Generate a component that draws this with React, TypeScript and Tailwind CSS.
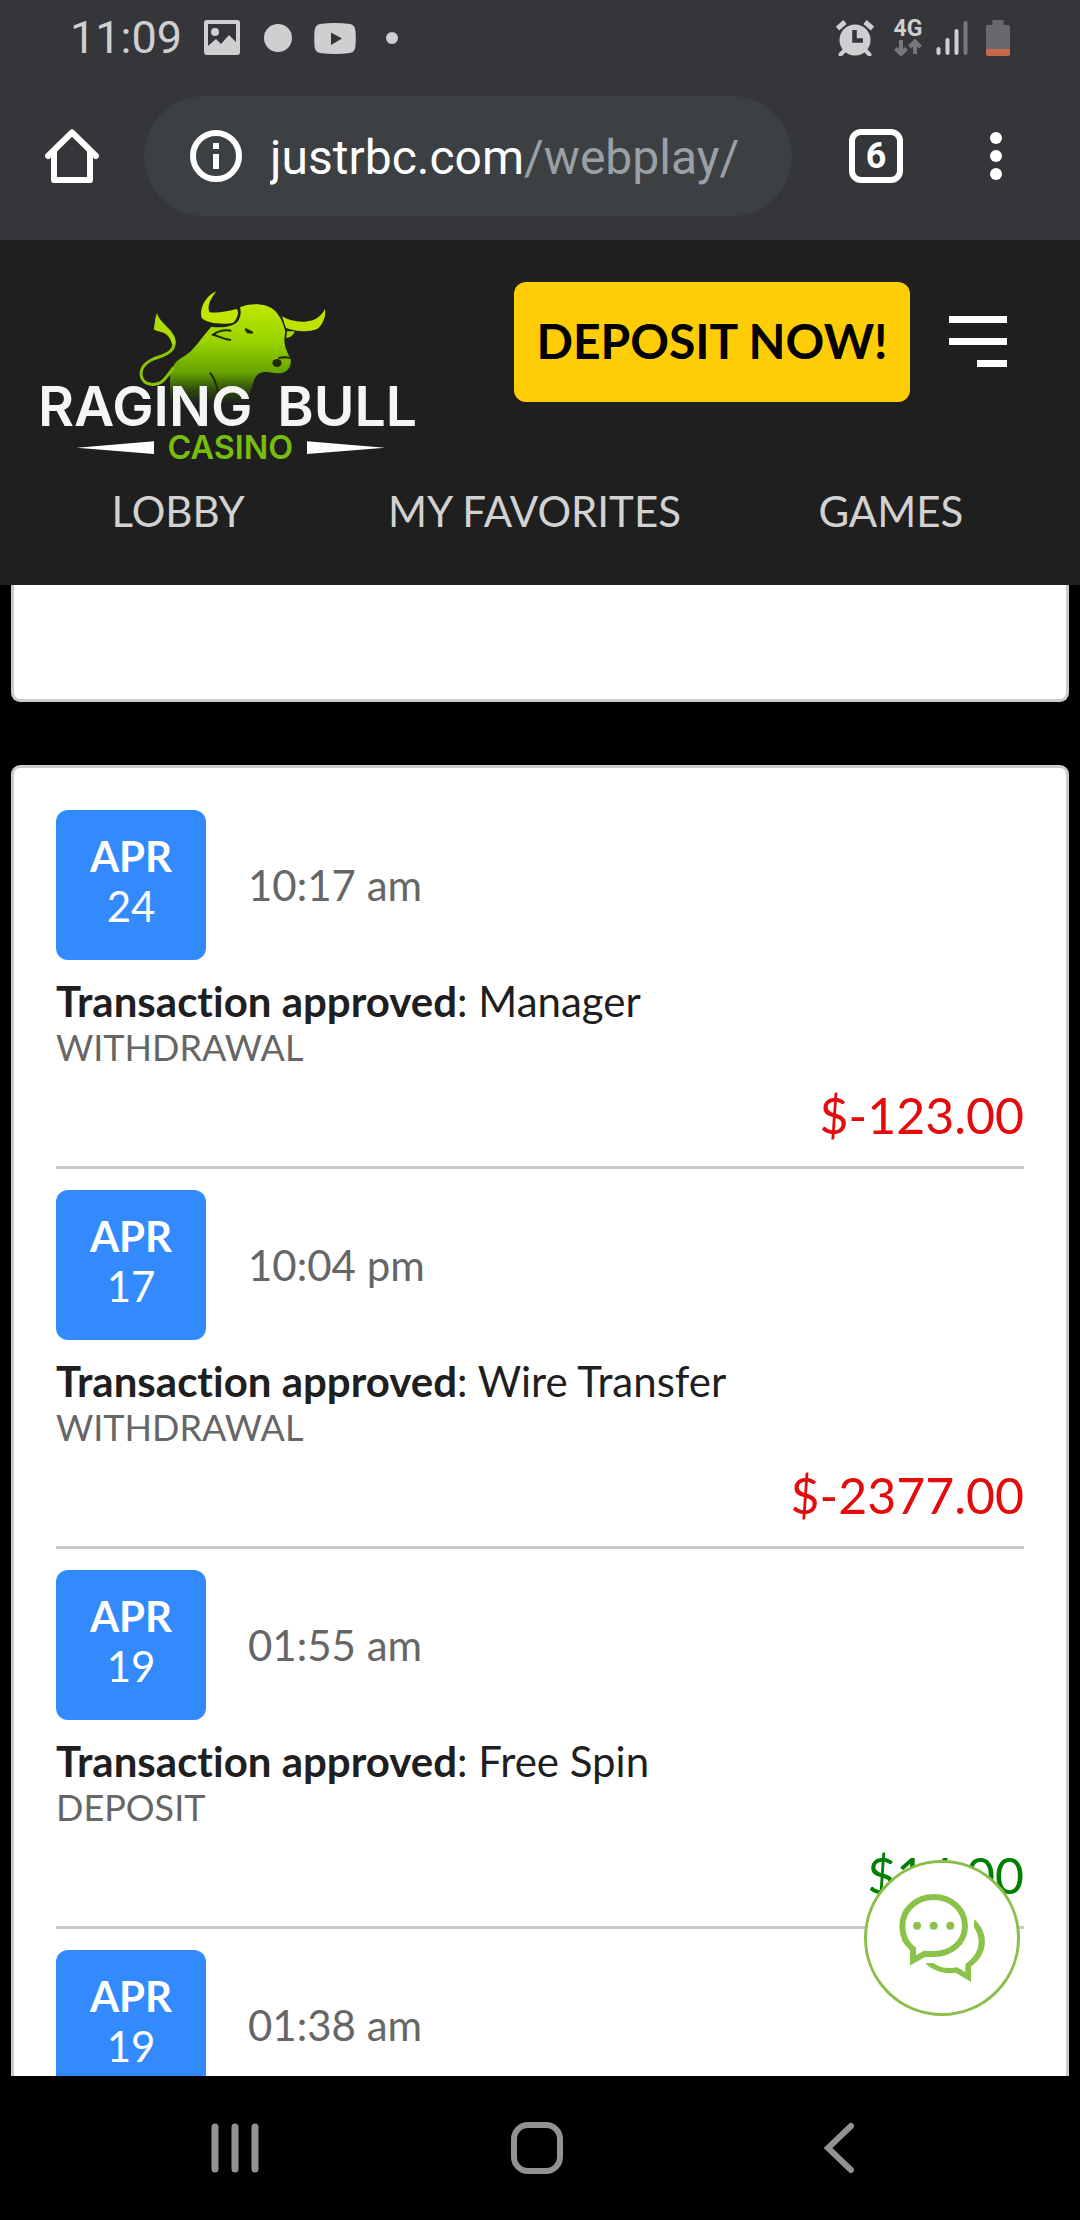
import React from "react";

type Transaction = {
  month: string;
  day: string;
  time: string;
  source: string;
  kind: string;
  amount: string;
  credit: boolean;
};

const transactions: Transaction[] = [
  { month: "APR", day: "24", time: "10:17 am", source: "Manager", kind: "WITHDRAWAL", amount: "$-123.00", credit: false },
  { month: "APR", day: "17", time: "10:04 pm", source: "Wire Transfer", kind: "WITHDRAWAL", amount: "$-2377.00", credit: false },
  { month: "APR", day: "19", time: "01:55 am", source: "Free Spin", kind: "DEPOSIT", amount: "$14.00", credit: true },
  { month: "APR", day: "19", time: "01:38 am", source: "Free Spin", kind: "DEPOSIT", amount: "$10.00", credit: true },
];

function StatusBar() {
  return (
    <div className="flex h-[76px] items-center justify-between px-[70px] text-[#cfcfd1]">
      <div className="flex items-center">
        <span className="w-[134px] text-[45px] leading-[76px]">11:09</span>
        <svg className="h-9 w-9" viewBox="0 0 36 36" fill="currentColor" aria-hidden="true">
          <path
            fillRule="evenodd"
            d="M3 0H33a3 3 0 0 1 3 3V32a3 3 0 0 1-3 3H3a3 3 0 0 1-3-3V3a3 3 0 0 1 3-3ZM4 4V26L12 19L17 24L25 15L32 22V4Z"
          />
          <circle cx="11" cy="12" r="4" />
        </svg>
        <span className="ml-6 h-7 w-7 rounded-full bg-current" />
        <svg className="ml-[22px] h-[31px] w-[42px]" viewBox="0 0 42 31" aria-hidden="true">
          <path
            fill="currentColor"
            fillRule="evenodd"
            d="M6 1Q21-1 36 1Q41 2 41.500 8Q42 15 41.500 23Q41 29 36 30Q21 32 6 30Q1 29 .5 23Q0 15 .5 8Q1 2 6 1ZM17 9.500V22L28 15.500Z"
          />
        </svg>
        <span className="ml-[30px] h-3 w-3 rounded-full bg-current" />
      </div>
      <div className="flex items-center">
        <svg className="h-9 w-[38px]" viewBox="0 0 38 36" fill="none" stroke="currentColor" aria-hidden="true">
          <circle cx="19" cy="20" r="15.500" fill="currentColor" stroke="none" />
          <path d="M1.500 8.500L9 2M36.500 8.500L29 2" strokeWidth="5" />
          <path d="M9 30L4.500 34.500M29 30L33.500 34.500" strokeWidth="4" strokeLinecap="round" />
          <path d="M18.500 10V20.500H27" stroke="#35363a" strokeWidth="4.500" />
        </svg>
        <div className="ml-5 flex w-7 flex-col items-center">
          <span className="text-[23px] font-bold leading-5">4G</span>
          <svg className="h-[18px] w-7" viewBox="0 0 28 18" fill="none" stroke="#77787a" strokeWidth="4" aria-hidden="true">
            <path d="M7 1V15M1.500 9.500L7 15L12.500 9.500M21 15V3M15.500 8L21 2.500L26.500 8" />
          </svg>
        </div>
        <svg className="ml-[14px] h-9 w-8" viewBox="0 0 32 36" fill="none" strokeWidth="4" strokeLinecap="round" aria-hidden="true">
          <path d="M2.500 29V33M11.500 20V33M20.500 11V33" stroke="currentColor" />
          <path d="M29.500 3V33" stroke="#77787a" />
        </svg>
        <svg className="ml-[18px] h-9 w-6" viewBox="0 0 24 36" aria-hidden="true">
          <path d="M6.500 0H17.500V5H22a2 2 0 0 1 2 2V30H0V7a2 2 0 0 1 2-2H6.500Z" fill="#68696c" />
          <path d="M0 29H24V34a2 2 0 0 1-2 2H2a2 2 0 0 1-2-2Z" fill="#c4694a" />
        </svg>
      </div>
    </div>
  );
}

function BrowserBar() {
  return (
    <div className="flex items-center pt-5 pr-[78px] pb-6 pl-[45px]">
      <button type="button" aria-label="Home" className="shrink-0">
        <svg className="h-[54px] w-[54px]" viewBox="0 0 54 54" fill="none" stroke="#fff" strokeLinejoin="round" strokeLinecap="round" aria-hidden="true">
          <path d="M3 27L27 3.500L51 27" strokeWidth="6" />
          <path d="M9 23V51H45V23" strokeWidth="6" />
        </svg>
      </button>
      <button type="button" className="ml-[45px] flex h-[120px] min-w-0 flex-1 items-center rounded-full bg-[#3c4043] pl-[46px] text-left">
        <svg className="h-[54px] w-[54px] shrink-0" viewBox="0 0 54 54" aria-hidden="true">
          <circle cx="26" cy="27" r="23" fill="none" stroke="#fff" strokeWidth="6" />
          <path d="M23 14H29V20H23ZM23 25H29V40H23Z" fill="#fff" />
        </svg>
        <span className="ml-[26px] truncate pt-[3px] text-[48px] leading-[60px] text-white">
          justrbc.com<span className="text-[#9aa0a6]">/webplay/</span>
        </span>
      </button>
      <button type="button" aria-label="Open tabs" className="ml-[57px] flex h-[54px] w-[54px] shrink-0 items-center justify-center rounded-xl border-6 border-white text-[36px] leading-9 font-bold text-white">
        6
      </button>
      <button type="button" aria-label="More options" className="ml-[87px] flex shrink-0 flex-col gap-[6px]">
        <span className="h-3 w-3 rounded-full bg-white" />
        <span className="h-3 w-3 rounded-full bg-white" />
        <span className="h-3 w-3 rounded-full bg-white" />
      </button>
    </div>
  );
}

function Logo() {
  return (
    <svg className="h-[170px] w-[378px] overflow-visible font-['Inter',sans-serif]" viewBox="66 60 1134 510" role="img" aria-label="Raging Bull Casino">
      <defs>
        <linearGradient id="bull" gradientUnits="userSpaceOnUse" x1="0" y1="90" x2="0" y2="400">
          <stop offset="0" stopColor="#c6ea00" />
          <stop offset="0.4" stopColor="#99d400" />
          <stop offset="0.7" stopColor="#66a300" />
          <stop offset="0.88" stopColor="#2c470f" />
          <stop offset="1" stopColor="#1f1f1f" />
        </linearGradient>
      </defs>
      <path
        d="M660 112C690 98 740 98 765 122C783 142 792 165 796 185C787 220 800 245 812 266C816 288 803 306 785 309C760 313 745 300 720 309C702 318 700 340 692 362L680 400H450V330C450 290 470 270 490 260C520 245 550 195 574 170C600 174 640 172 655 152C665 135 662 120 660 112Z"
        fill="url(#bull)"
      />
      <path d="M589 64C570 88 560 112 569 127C595 130 630 122 650 117C658 125 654 143 640 158C610 165 560 160 545 144C538 120 552 80 589 64Z" fill="#c3e600" />
      <path d="M786 139C815 156 850 160 880 150C898 142 908 130 915 117C919 142 907 166 890 178C860 189 820 182 798 174C793 160 790 150 786 139Z" fill="#bde300" />
      <path d="M801 184L824 184C820 198 808 203 799 204Z" fill="#a5d800" />
      <path d="M411 130C417 150 436 165 452 182C470 203 472 225 458 243C459 215 447 195 430 188C417 184 406 182 401 178C406 160 403 148 411 130Z" fill="#addd00" />
      <path d="M462 222C458 252 425 257 400 267C372 280 360 295 364 318C370 347 412 352 434 327C447 312 454 302 461 292" fill="none" stroke="#8bc500" strokeWidth="9" />
      <g fill="none" stroke="#1f2a08" strokeWidth="6">
        <path d="M634 182C610 178 592 185 580 194C595 198 610 208 633 210" />
        <path d="M676 177L698 188L683 187Z" fill="#1f2a08" />
        <path d="M812 265C800 260 785 262 775 264" />
        <path d="M570 308C582 322 590 345 597 375" />
      </g>
      <ellipse cx="771" cy="279" rx="14" ry="12" fill="#1f2a08" />
      <g fontSize="166" fontWeight="600" fill="#f5f5f5">
        <text x="54" y="468">RAGING</text>
        <text x="772" y="468">BULL</text>
      </g>
      <text x="631" y="566" fontSize="97" fontWeight="600" textAnchor="middle" fill="#79bd0c">CASINO</text>
      <path d="M170 533L402 514V552ZM1095 533L861 514V552Z" fill="#fff" />
    </svg>
  );
}

function SiteHeader() {
  return (
    <header className="bg-[#1f1f1f] font-['Lato',sans-serif]">
      <div className="flex h-[220px] items-start pt-[42px] pr-[73px] pl-[42px]">
        <a href="#home" className="mt-2">
          <Logo />
        </a>
        <button type="button" className="ml-auto h-[120px] w-[396px] rounded-xl bg-[#ffcd05] pb-[3px] text-[48px] font-bold text-black">
          DEPOSIT NOW!
        </button>
        <button type="button" aria-label="Menu" className="mt-[34px] ml-[39px] flex w-[58px] flex-col items-end gap-[15px]">
          <span className="h-[7px] w-full bg-white" />
          <span className="h-[7px] w-full bg-white" />
          <span className="h-[7px] w-[30px] bg-white" />
        </button>
      </div>
      <nav className="mr-[11px] grid grid-cols-3 pt-[21px] pb-11 text-center text-[42px] leading-[60px] text-[#d2d2d2]">
        <a href="#lobby">LOBBY</a>
        <a href="#favorites">MY FAVORITES</a>
        <a href="#games">GAMES</a>
      </nav>
    </header>
  );
}

function TransactionRow({ item }: { item: Transaction }) {
  return (
    <li className="mb-[21px] border-b-3 border-[#cacaca] pb-3">
      <div className="flex items-center">
        <div className="flex h-[150px] w-[150px] flex-col items-center rounded-xl bg-[#338afc] pt-[21px] text-[42px] leading-[50px] text-white">
          <span className="font-bold">{item.month}</span>
          <span>{item.day}</span>
        </div>
        <time className="ml-[42px] text-[42px] leading-[50px] text-[#666]">{item.time}</time>
      </div>
      <p className="mt-4 text-[42px] leading-[50px] text-[#1f1f1f]">
        <strong className="font-bold">Transaction approved</strong>: {item.source}
      </p>
      <p className="text-[36px] leading-[42px] text-[#666]">{item.kind}</p>
      <p className={item.credit ? "mt-2 text-right text-[50px] leading-[78px] text-[#008000]" : "mt-2 text-right text-[50px] leading-[78px] text-[#e30b0b]"}>
        {item.amount}
      </p>
    </li>
  );
}

function ChatButton() {
  return (
    <button type="button" aria-label="Open chat" className="absolute right-[60px] bottom-[60px] h-[156px] w-[156px] rounded-full border-3 border-[#8bbf4a] bg-white">
      <svg className="h-full w-full" viewBox="141 129 450 450" aria-hidden="true">
        <path
          d="M279 387C255 369 247 343 247 318C247 268 290 231 341 231C393 231 435 268 435 318C435 368 393 402 341 402C331 402 322 402 315 401L279 421Z"
          fill="none"
          stroke="#8bc34a"
          strokeWidth="18"
        />
        <path d="M463 298C507 338 507 402 453 440V486L407 458C370 464 336 451 316 429L340 429C360 445 385 446 412 442L436 457V432C481 400 486 358 461 320Z" fill="#8bc34a" />
        <g fill="#8bc34a">
          <circle cx="291" cy="317" r="12" />
          <circle cx="341" cy="317" r="12" />
          <circle cx="391" cy="317" r="12" />
        </g>
      </svg>
    </button>
  );
}

function SystemNav() {
  return (
    <nav aria-label="System" className="grid h-36 shrink-0 grid-cols-3 items-center justify-items-center bg-black pr-[90px] pl-[84px]">
      <button type="button" aria-label="Recent apps">
        <svg className="h-[52px] w-12" viewBox="0 0 48 52" stroke="#929292" strokeWidth="7" strokeLinecap="round" aria-hidden="true">
          <path d="M4 5V47M24 5V47M44 5V47" />
        </svg>
      </button>
      <button type="button" aria-label="Home screen">
        <svg className="h-[52px] w-[52px]" viewBox="0 0 52 52" fill="none" stroke="#929292" strokeWidth="6" aria-hidden="true">
          <rect x="3" y="3" width="46" height="46" rx="14" />
        </svg>
      </button>
      <button type="button" aria-label="Back">
        <svg className="h-[52px] w-8" viewBox="0 0 32 52" fill="none" stroke="#929292" strokeWidth="6" strokeLinecap="round" aria-hidden="true">
          <path d="M28 4L5 26L28 48" />
        </svg>
      </button>
    </nav>
  );
}

export default function App() {
  return (
    <div className="flex h-screen flex-col overflow-hidden bg-black font-['Roboto',sans-serif]">
      <div className="bg-[#35363a]">
        <StatusBar />
        <BrowserBar />
      </div>
      <SiteHeader />
      <main className="relative min-h-0 flex-1 overflow-hidden px-[11px] font-['Lato',sans-serif] [font-variant-ligatures:none]">
        <section className="mb-[63px] h-[117px] rounded-b-[9px] border-3 border-t-0 border-[#ccc] bg-white" />
        <section className="rounded-[9px] border-3 border-[#ccc] bg-white px-[42px] pt-[42px]">
          <ul>
            {transactions.map((item) => (
              <TransactionRow key={item.day + item.time} item={item} />
            ))}
          </ul>
        </section>
        <ChatButton />
      </main>
      <SystemNav />
    </div>
  );
}
